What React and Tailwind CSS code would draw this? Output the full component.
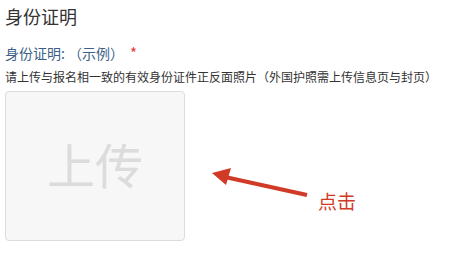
export default function App() {
  return (
    <div
      className="h-[258px] w-[454px] overflow-hidden bg-white px-[5px] pt-[4px] text-[#333]"
      style={{ fontFamily: '"Noto Sans CJK SC", "Noto Sans", sans-serif' }}
    >
      <h1 className="text-[18px] leading-[24px] font-normal text-[#333]">身份证明</h1>

      <div className="mt-[15px] flex items-center text-[14px] leading-[20px] text-[#3d5f86]">
        <span>身份证明:</span>
        <span className="ml-[3px]">（示例）</span>
        <span className="ml-[6px] text-[15px] text-[#e53935]">*</span>
      </div>

      <p className="mt-[5px] text-[12px] leading-[17px] text-[#333]">
        请上传与报名相一致的有效身份证件正反面照片（外国护照需上传信息页与封页）
      </p>

      <div className="mt-[6px] flex items-start">
        <button
          type="button"
          className="flex h-[150px] w-[180px] items-center justify-center rounded-[4px] border border-[#dcdcdc] bg-[#f7f7f7] pb-[6px] text-[48px] text-[#dcdcdc]"
        >
          上传
        </button>

        <div className="ml-[20px] mt-[72px] flex items-start">
          <svg width="104" height="36" viewBox="0 0 104 36" className="text-[#d13a26]">
            <line x1="20" y1="14" x2="102" y2="32" stroke="currentColor" strokeWidth="4" />
            <polygon points="7,10 26,5 21,22" fill="currentColor" />
          </svg>
          <span className="ml-[9px] mt-[26px] text-[19px] leading-[24px] text-[#d13a26]">点击</span>
        </div>
      </div>
    </div>
  )
}
